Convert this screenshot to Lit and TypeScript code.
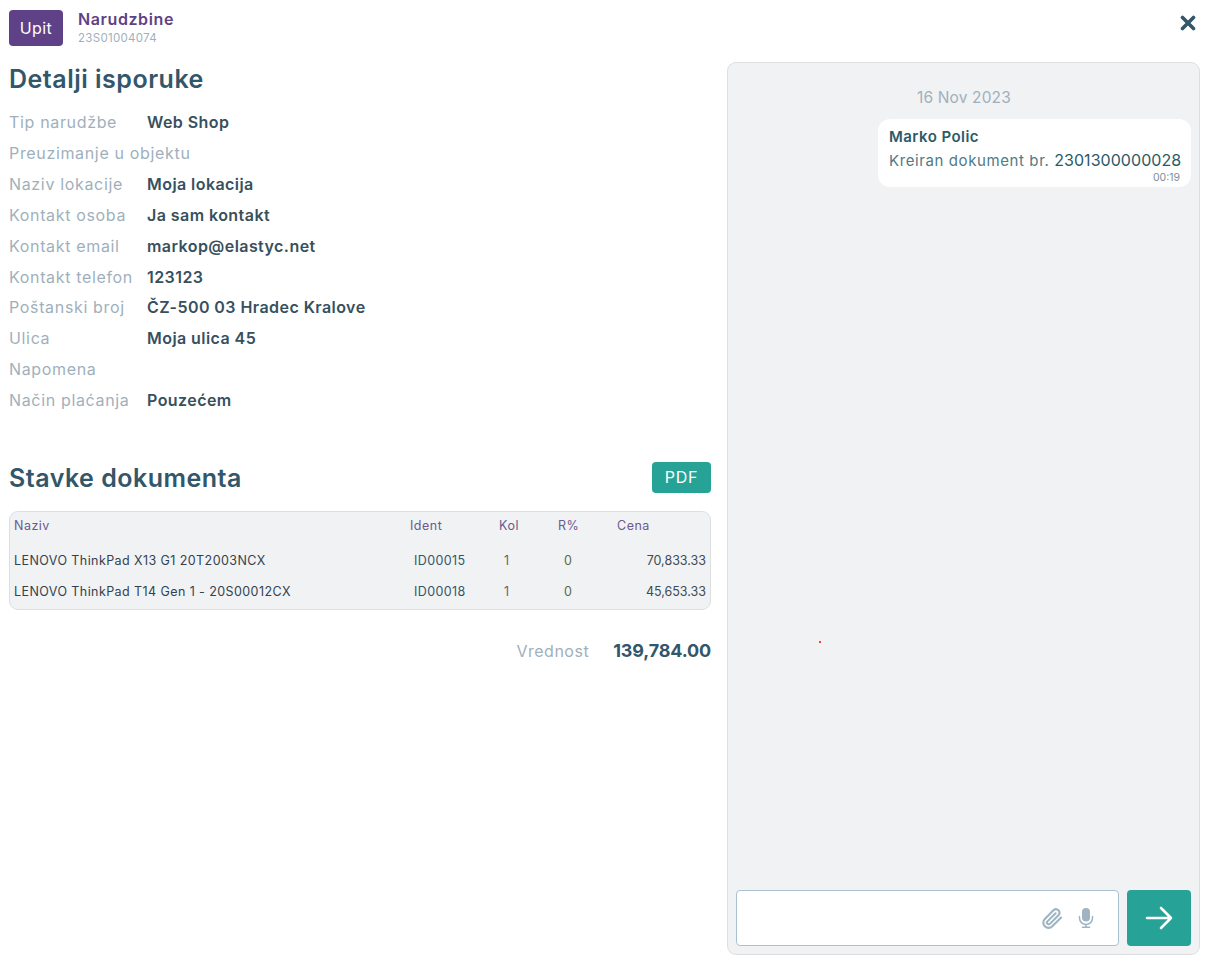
import { LitElement, html, css } from "lit";
import { customElement } from "lit/decorators.js";

const details: [string, string][] = [
  ["Tip narudžbe", "Web Shop"],
  ["Preuzimanje u objektu", ""],
  ["Naziv lokacije", "Moja lokacija"],
  ["Kontakt osoba", "Ja sam kontakt"],
  ["Kontakt email", "markop@elastyc.net"],
  ["Kontakt telefon", "123123"],
  ["Poštanski broj", "ČZ-500 03 Hradec Kralove"],
  ["Ulica", "Moja ulica 45"],
  ["Napomena", ""],
  ["Način plaćanja", "Pouzećem"],
];

const items = [
  ["LENOVO ThinkPad X13 G1 20T2003NCX", "ID00015", "1", "0", "70,833.33"],
  ["LENOVO ThinkPad T14 Gen 1 - 20S00012CX", "ID00018", "1", "0", "45,653.33"],
];

@customElement("app-root")
export class AppRoot extends LitElement {
  static styles = css`
    :host {
      display: block;
      width: 1210px;
      height: 969px;
      background: #fff;
      font-family: Inter, "Open Sans", sans-serif;
      color: #32566a;
      overflow: hidden;
      position: relative;
    }
    * { box-sizing: border-box; }
    .page { display: flex; flex-direction: column; height: 969px; padding: 10px 10px 14px 9px; }
    .top { display: flex; align-items: flex-start; height: 36px; }
    .badge {
      width: 54px; height: 36px; background: #5e4186; color: #fff; border-radius: 4px;
      display: flex; align-items: center; justify-content: center; font-size: 16px; letter-spacing: .4px;
    }
    .titles { margin: 0 0 0 15px; flex: 1; }
    .title { font-size: 16px; line-height: 18px; font-weight: 600; color: #5e4186; letter-spacing: .6px; }
    .sub { font-size: 11.5px; line-height: 16px; margin-top: 2px; color: #9fb0bc; letter-spacing: .3px; }
    .close { margin: 5px 4px 0 0; width: 16px; height: 16px; display: block; }
    .cols { display: flex; gap: 16px; flex: 1; margin-top: 16px; min-height: 0; }
    .left { width: 702px; }
    h2 { margin: 0; font-size: 25px; line-height: 34px; font-weight: 600; color: #32566a; letter-spacing: .5px; }
    .details { margin-top: 11px; }
    .row { display: flex; height: 30.85px; align-items: center; font-size: 16px; }
    .lbl { width: 138px; flex: none; color: #9fb0bc; white-space: nowrap; letter-spacing: .66px; }
    .val { font-weight: 600; color: #37505e; letter-spacing: .44px; white-space: nowrap; }
    .head2 { display: flex; justify-content: space-between; align-items: center; margin-top: 46px; height: 32px; }
    .head2 h2 { padding-top: 2px; }
    .pdf {
      width: 59px; height: 31px; background: #26a396; color: #fff; border-radius: 4px; font-size: 16px;
      display: flex; align-items: center; justify-content: center; letter-spacing: .7px;
    }
    .table {
      margin-top: 18px; height: 99px; border: 1px solid #dcdfe2; border-radius: 9px; background: #f1f2f4;
      padding: 0 4px;
      font-size: 12.5px;
    }
    .tr { display: grid; grid-template-columns: 396px 89px 59px 59px 1fr; align-items: center; height: 31px; }
    .tr.h { height: 26px; margin-bottom: 7px; }
    .tr.h > div { color: #6a5a8e; letter-spacing: .5px; }
    .tr > div { white-space: nowrap; }
    .c1 { color: #32424f; letter-spacing: .42px; }
    .c2 { color: #32566a; padding-left: 4px; letter-spacing: .4px; }
    .c3 { color: #7a5a5a; padding-left: 5px; }
    .c4 { color: #5a6a4a; padding-left: 6px; }
    .c5 { color: #404a50; text-align: right; }
    .tr.h .c2, .tr.h .c3, .tr.h .c4 { padding-left: 0; }
    .tr.h .c5 { text-align: left; }
    .total { display: flex; justify-content: flex-end; align-items: center; margin-top: 24px; height: 33px; }
    .total .l { color: #9fb0bc; font-size: 16px; letter-spacing: .5px; margin-right: 24px; }
    .total .v { font-weight: 700; font-size: 18px; color: #32566a; letter-spacing: -.15px; }
    .panel {
      width: 473px; border: 1px solid #dcdfe2; border-radius: 9px; background: #f1f2f4;
      padding: 0 8px 8px; display: flex; flex-direction: column; position: relative;
    }
    .date { color: #9fb0bc; font-size: 15.5px; line-height: 20px; margin: 25px 0 0 181px; letter-spacing: .15px; }
    .bubble {
      align-self: flex-end; background: #fff; border-radius: 12px; padding: 8px 11px 4px 11px; margin-top: 11px; width: 313px;
    }
    .who { font-size: 15px; line-height: 20px; font-weight: 600; color: #2a5a68; letter-spacing: .45px; }
    .msg { font-size: 15px; line-height: 20px; margin-top: 3px; color: #4f7a86; letter-spacing: .6px; white-space: nowrap; }
    .msg b { font-weight: 400; color: #2a5a68; font-size: 16px; letter-spacing: .05px; }
    .time { font-size: 10.5px; line-height: 11px; text-align: right; color: #7a8f9a; margin-top: 1px; }
    .spacer { flex: 1; }
    .composer { display: flex; gap: 8px; height: 56px; }
    .input {
      flex: 1; background: #fff; border: 1px solid #a9c2cd; border-radius: 4px;
      display: flex; align-items: center; justify-content: flex-end; padding: 0 24px 0 0; gap: 14px;
    }
    .send { width: 64px; background: #26a396; border-radius: 4px; display: flex; align-items: center; justify-content: center; }
    .dot { position: absolute; left: 91px; top: 578px; width: 2px; height: 2px; border-radius: 50%; background: #f00; }
  `;

  render() {
    return html`
      <div class="page">
        <div class="top">
          <div class="badge">Upit</div>
          <div class="titles">
            <div class="title">Narudzbine</div>
            <div class="sub">23S01004074</div>
          </div>
          <svg class="close" viewBox="0 0 16 16" aria-label="close">
            <path d="M2.5 2.5 L13.5 13.5 M13.5 2.5 L2.5 13.5" stroke="#32566a" stroke-width="3.6" stroke-linecap="round" fill="none"/>
          </svg>
        </div>
        <div class="cols">
          <div class="left">
            <h2>Detalji isporuke</h2>
            <div class="details">
              ${details.map(
                ([l, v]) => html`<div class="row"><div class="lbl">${l}</div><div class="val">${v}</div></div>`
              )}
            </div>
            <div class="head2">
              <h2>Stavke dokumenta</h2>
              <div class="pdf">PDF</div>
            </div>
            <div class="table">
              <div class="tr h">
                <div class="c1">Naziv</div><div class="c2">Ident</div><div class="c3">Kol</div><div class="c4">R%</div><div class="c5">Cena</div>
              </div>
              ${items.map(
                (r) => html`<div class="tr">
                  <div class="c1">${r[0]}</div><div class="c2">${r[1]}</div><div class="c3">${r[2]}</div><div class="c4">${r[3]}</div><div class="c5">${r[4]}</div>
                </div>`
              )}
            </div>
            <div class="total"><span class="l">Vrednost</span><span class="v">139,784.00</span></div>
          </div>
          <div class="panel">
            <div class="date">16 Nov 2023</div>
            <div class="bubble">
              <div class="who">Marko Polic</div>
              <div class="msg">Kreiran dokument br. <b>2301300000028</b></div>
              <div class="time">00:19</div>
            </div>
            <div class="spacer"></div>
            <div class="composer">
              <div class="input">
                <svg width="23" height="23" viewBox="0 0 24 24" fill="none" stroke="#9fb4c2" stroke-width="2.2" stroke-linecap="round" stroke-linejoin="round">
                  <path d="M21 11 L11.8 20.2 a5.5 5.5 0 0 1 -7.8 -7.8 L13.2 3.2 a3.7 3.7 0 0 1 5.2 5.2 L9.3 17.6 a1.8 1.8 0 0 1 -2.6 -2.6 L15.2 6.6"/>
                </svg>
                <svg width="16" height="20" viewBox="0 0 16 20">
                  <rect x="4" y="0" width="8" height="13.5" rx="4" fill="#9fb4c2"/>
                  <path d="M1.5 8.5 V10 a6.5 6.5 0 0 0 13 0 V8.5" fill="none" stroke="#9fb4c2" stroke-width="1.5" stroke-linecap="round"/>
                  <path d="M8 16.5 V19 M4.5 19.3 H11.5" stroke="#9fb4c2" stroke-width="1.5" stroke-linecap="round"/>
                </svg>
              </div>
              <div class="send">
                <svg width="28" height="24" viewBox="0 0 28 24" fill="none" stroke="#fff" stroke-width="2.6" stroke-linecap="round" stroke-linejoin="round">
                  <path d="M2 12 H26 M16 2 L26 12 L16 22"/>
                </svg>
              </div>
            </div>
            <div class="dot"></div>
          </div>
        </div>
      </div>
    `;
  }
}
